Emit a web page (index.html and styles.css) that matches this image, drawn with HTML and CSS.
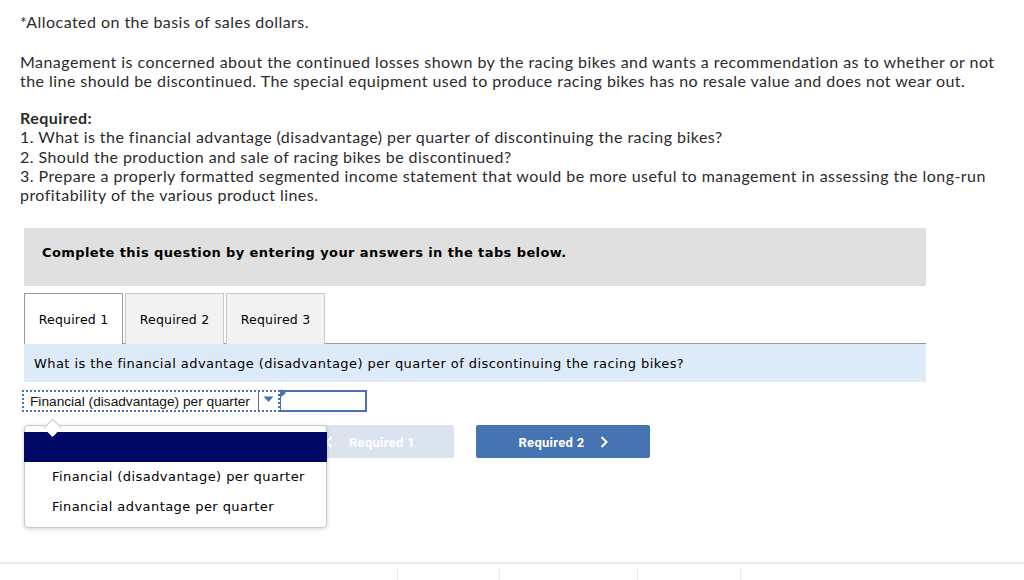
FILE: index.html
```html
<!DOCTYPE html>
<html>
<head>
<meta charset="utf-8">
<link rel="stylesheet" href="styles.css">
</head>
<body>
<div class="page">
  <p class="note">*Allocated on the basis of sales dollars.</p>
  <p class="para">Management is concerned about the continued losses shown by the racing bikes and wants a recommendation as to whether or not the line should be discontinued. The special equipment used to produce racing bikes has no resale value and does not wear out.</p>
  <div class="req">
    <div class="req-title">Required:</div>
    <div>1. What is the financial advantage (disadvantage) per quarter of discontinuing the racing bikes?</div>
    <div>2. Should the production and sale of racing bikes be discontinued?</div>
    <div>3. Prepare a properly formatted segmented income statement that would be more useful to management in assessing the long-run profitability of the various product lines.</div>
  </div>

  <div class="question">
    <div class="banner">Complete this question by entering your answers in the tabs below.</div>
    <div class="tabs">
      <div class="tab active">Required 1</div>
      <div class="tab">Required 2</div>
      <div class="tab">Required 3</div>
    </div>
    <div class="prompt">What is the financial advantage (disadvantage) per quarter of discontinuing the racing bikes?</div>

    <div class="answer-row">
      <div class="select">
        <span class="select-text">Financial (disadvantage) per quarter</span>
        <span class="select-btn"><svg width="11" height="7" viewBox="0 0 11 7"><path d="M0.5 0.5 L10.5 0.5 L5.5 6 Z" fill="#4a72b0"/></svg></span>
      </div>
      <div class="input"><span class="input-flag"></span></div>

      <div class="popup">
        <span class="caret"></span>
        <div class="opt selected"></div>
        <div class="opt">Financial (disadvantage) per quarter</div>
        <div class="opt">Financial advantage per quarter</div>
      </div>
    </div>

    <div class="nav">
      <div class="btn prev"><svg class="chev" width="8" height="12" viewBox="0 0 8 12"><path d="M6.5 1 L1.5 6 L6.5 11" fill="none" stroke="#fff" stroke-width="2"/></svg>Required 1</div>
      <div class="btn next">Required 2<svg class="chev" width="8" height="12" viewBox="0 0 8 12"><path d="M1.5 1 L6.5 6 L1.5 11" fill="none" stroke="#fff" stroke-width="2"/></svg></div>
    </div>
  </div>
</div>
<div class="footer">
  <span class="vl"></span><span class="vl"></span><span class="vl"></span><span class="vl"></span>
</div>
</body>
</html>
```

FILE: styles.css
```css
html, body {
  margin: 0;
  padding: 0;
  background: #fff;
}
.page {
  padding: 12px 20px 0 20px;
  height: 562px;
  box-sizing: border-box;
  font-family: Lato, "Open Sans", sans-serif;
  color: #2b2b2b;
  font-size: 16px;
  letter-spacing: 0.45px;
  line-height: 19px;
}
.note {
  margin: 0;
}
.para {
  margin: 21px 0 0 0;
  width: 990px;
}
.req {
  margin-top: 18px;
  line-height: 19.3px;
}
.req-title {
  font-weight: bold;
}
.question {
  margin: 24px 0 0 4px;
  width: 902px;
  font-family: "DejaVu Sans", Verdana, sans-serif;
  letter-spacing: 0.43px;
  color: #000;
}
.banner {
  background: #e0e0e0;
  height: 58px;
  box-sizing: border-box;
  padding: 16px 18px 0 18px;
  font-weight: bold;
  font-size: 13px;
  line-height: 17px;
  letter-spacing: 0.4px;
}
.tabs {
  display: flex;
  gap: 2px;
  margin-top: 7px;
  height: 50px;
  position: relative;
  z-index: 1;
}
.tab {
  width: 99px;
  height: 51px;
  box-sizing: border-box;
  border: 1px solid #c8c8c8;
  border-bottom: none;
  background: #f2f2f2;
  font-size: 12.5px;
  letter-spacing: 0.2px;
  display: flex;
  align-items: center;
  justify-content: center;
}
.tab.active {
  background: #fff;
  border-color: #9a9a9a;
}
.prompt {
  background: #ddebf8;
  border-top: 1px solid #999;
  height: 39px;
  box-sizing: border-box;
  padding: 11px 10px 0 10px;
  font-size: 13px;
  line-height: 17px;
}
.answer-row {
  position: relative;
  display: flex;
  margin: 8px 0 0 -2px;
  height: 22px;
}
.select {
  width: 258px;
  height: 22px;
  box-sizing: border-box;
  border: 2px dotted #4a72b0;
  display: flex;
  align-items: center;
  font-family: "Liberation Sans", Arial, sans-serif;
  font-size: 13.7px;
  letter-spacing: 0;
  color: #111;
}
.select-text {
  flex: 1;
  padding-left: 6px;
  white-space: nowrap;
}
.select-btn {
  width: 20px;
  height: 18px;
  border-left: 1px solid #4a72b0;
  display: flex;
  align-items: center;
  justify-content: center;
  padding-bottom: 3px;
  box-sizing: border-box;
}
.input {
  position: relative;
  width: 87px;
  height: 22px;
  box-sizing: border-box;
  border: 2px solid #4a72b0;
  border-left: 1px solid #4a72b0;
  background: #fff;
}
.input-flag {
  position: absolute;
  left: 0;
  top: -3px;
  width: 0;
  height: 0;
  border-top: 4px solid transparent;
  border-bottom: 4px solid transparent;
  border-left: 5px solid #4a72b0;
}
.popup {
  position: absolute;
  left: 2px;
  top: 35px;
  width: 303px;
  height: 103px;
  box-sizing: border-box;
  background: #fff;
  border: 1px solid #c9c9c9;
  border-radius: 4px;
  box-shadow: 0 1px 4px rgba(0,0,0,0.18);
  padding-top: 6px;
  z-index: 5;
  font-size: 13px;
  line-height: 17px;
}
.caret {
  position: absolute;
  left: 21px;
  top: -9px;
  width: 12px;
  height: 12px;
  background: #fff;
  border-left: 1px solid #c9c9c9;
  border-top: 1px solid #c9c9c9;
  transform: rotate(45deg) translate(3px, 3px);
}
.opt {
  height: 30px;
  box-sizing: border-box;
  padding: 6px 0 0 27px;
  white-space: nowrap;
}
.opt.selected {
  background: #000866;
  margin: 0 -1px;
}
.nav {
  display: flex;
  gap: 22px;
  margin: 13px 0 0 256px;
}
.btn {
  width: 174px;
  height: 33px;
  border-radius: 2px;
  display: flex;
  align-items: center;
  justify-content: center;
  padding-top: 1px;
  box-sizing: border-box;
  font-family: Roboto, "Noto Sans", sans-serif;
  font-weight: bold;
  font-size: 13px;
  letter-spacing: 0.3px;
  color: #fff;
}
.prev {
  background: #dbe3ee;
  gap: 16px;
  padding-left: 6px;
}
.next {
  background: #4673b1;
  gap: 15px;
}
.footer {
  height: 18px;
  border-top: 2px solid #ececec;
  box-sizing: border-box;
  position: relative;
}
.vl {
  position: absolute;
  top: 4px;
  bottom: 0;
  width: 1px;
  background: #ececec;
}
.vl:nth-child(1) { left: 397px; }
.vl:nth-child(2) { left: 499px; }
.vl:nth-child(3) { left: 637px; }
.vl:nth-child(4) { left: 740px; }
```
